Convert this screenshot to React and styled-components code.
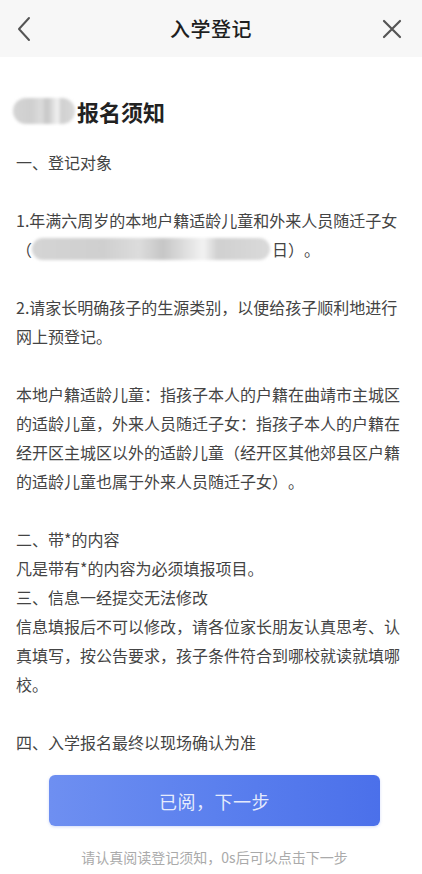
import React from 'react'
import styled, { createGlobalStyle } from 'styled-components'

const GlobalStyle = createGlobalStyle`
    html, body {
        margin: 0;
        padding: 0;
        background: #fff;
    }
    body {
        font-family: "Noto Sans CJK SC", "Noto Sans", sans-serif;
        text-spacing-trim: space-all;
    }
`

const notice = [
    { text: '一、登记对象', gap: true },
    { text: '1.年满六周岁的本地户籍适龄儿童和外来人员随迁子女', blurLine: true, gap: true },
    { text: '2.请家长明确孩子的生源类别，以便给孩子顺利地进行网上预登记。', gap: true },
    { text: '本地户籍适龄儿童：指孩子本人的户籍在曲靖市主城区的适龄儿童，外来人员随迁子女：指孩子本人的户籍在经开区主城区以外的适龄儿童（经开区其他郊县区户籍的适龄儿童也属于外来人员随迁子女）。', gap: true },
    { text: '二、带*的内容' },
    { text: '凡是带有*的内容为必须填报项目。' },
    { text: '三、信息一经提交无法修改' },
    { text: '信息填报后不可以修改，请各位家长朋友认真思考、认真填写，按公告要求，孩子条件符合到哪校就读就填哪校。', gap: true },
    { text: '四、入学报名最终以现场确认为准' },
]

const App = () => {
    return (
        <Page>
            <GlobalStyle />
            <NavBar>
                <NavButton aria-label='back'>
                    <svg width='16' height='26' viewBox='0 0 16 26' fill='none'>
                        <path d='M13 2 L3 13 L13 24' stroke='#555' strokeWidth='2' strokeLinecap='round' strokeLinejoin='round' />
                    </svg>
                </NavButton>
                <NavTitle>入学登记</NavTitle>
                <NavButton aria-label='close'>
                    <svg width='20' height='20' viewBox='0 0 20 20' fill='none'>
                        <path d='M2 2 L18 18 M18 2 L2 18' stroke='#555' strokeWidth='2.2' strokeLinecap='round' />
                    </svg>
                </NavButton>
            </NavBar>

            <Content>
                <Headline>
                    <Blur width={62} />
                    报名须知
                </Headline>

                <Notice>
                    {notice.map((item, i) => (
                        <Para key={i} gap={item.gap}>
                            {item.text}
                            {item.blurLine && (
                                <>
                                    <br />
                                    （<Blur width={238} inline />日）。
                                </>
                            )}
                        </Para>
                    ))}
                </Notice>
            </Content>

            <Footer>
                <NextButton type='button'>已阅，下一步</NextButton>
                <Hint>请认真阅读登记须知，0s后可以点击下一步</Hint>
            </Footer>
        </Page>
    )
}

const Page = styled.div`
    width: 422px;
    min-height: 874px;
    background: #fff;
    display: flex;
    flex-direction: column;
`

const NavBar = styled.div`
    height: 57px;
    background: #f7f7f7;
    display: flex;
    align-items: center;
    justify-content: space-between;
    padding: 0 18px 0 12px;
`

const NavButton = styled.div`
    width: 24px;
    height: 28px;
    display: flex;
    align-items: center;
    justify-content: center;
`

const NavTitle = styled.h1`
    margin: 0 0 0 6px;
    font-size: 20px;
    font-weight: 500;
    color: #1f1f1f;
    letter-spacing: 0.5px;
`

const Content = styled.div`
    padding: 39px 16px 0;
`

const Headline = styled.h2`
    margin: 0;
    height: 30px;
    display: flex;
    align-items: center;
    font-size: 22px;
    font-weight: 700;
    color: #222;
    margin-left: -3px;
`

const Blur = styled.span`
    display: inline-block;
    width: ${p => p.width}px;
    height: ${p => (p.inline ? 22 : 26)}px;
    border-radius: 13px;
    vertical-align: ${p => (p.inline ? '-4px' : 'middle')};
    margin-right: 2px;
    background: linear-gradient(90deg,
        #d4d4d4 0%, #cfcfcf 30%, #dcdcdc 45%, #c6c6c6 55%,
        #f2f2f2 72%, #d0d0d0 78%, #dadada 100%);
    filter: blur(1.5px);
`

const Notice = styled.div`
    margin-top: 22px;
    font-size: 16px;
    line-height: 29px;
    color: #444;
`

const Para = styled.p`
    margin: 0 0 ${p => (p.gap ? '29px' : '0')};
`

const Footer = styled.div`
    display: flex;
    flex-direction: column;
    align-items: center;
    padding: 18px 0 0 7px;
`

const NextButton = styled.button`
    width: 331px;
    height: 51px;
    border: none;
    border-radius: 6px;
    background: linear-gradient(90deg, #6e8ff1 0%, #5b80ee 50%, #4b70ea 100%);
    color: rgba(255, 255, 255, 0.86);
    font-family: "Noto Sans CJK SC", sans-serif;
    font-size: 18px;
    letter-spacing: 0.5px;
    box-shadow: 0 1px 3px rgba(70, 110, 230, 0.25);
`

const Hint = styled.div`
    margin-top: 21px;
    font-size: 14px;
    line-height: 20px;
    color: #aaa;
`

export default App
